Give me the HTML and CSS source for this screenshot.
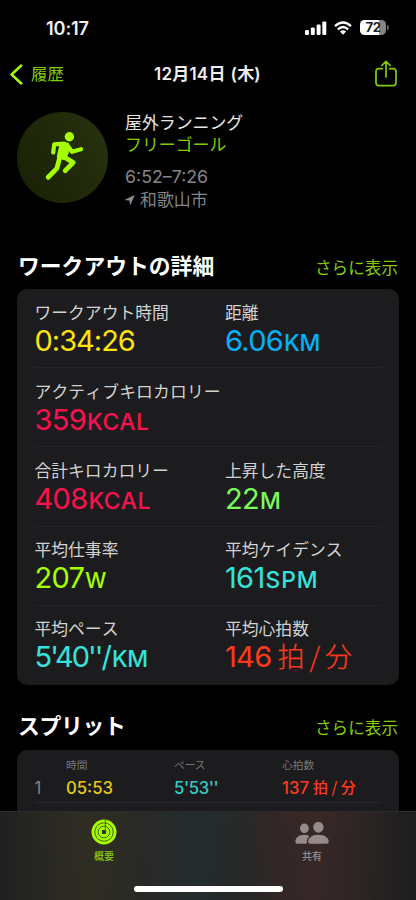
FILE: index.html
```html
<!DOCTYPE html>
<html lang="ja">
<head>
<meta charset="utf-8">
<meta name="viewport" content="width=device-width, initial-scale=1">
<title>ワークアウト</title>
<link rel="stylesheet" href="styles.css">
</head>
<body>
<div class="screen">
  <header class="status">
    <span class="clock">10:17</span>
    <div class="indicators">
      <svg class="signal" width="22" height="14" viewBox="0 0 22 14" fill="#fff"><rect x="0" y="9" width="4" height="5" rx="1.2"/><rect x="5.8" y="6.6" width="4" height="7.4" rx="1.2"/><rect x="11.6" y="3.6" width="4" height="10.4" rx="1.2"/><rect x="17.3" y="0.4" width="4" height="13.6" rx="1.2"/></svg>
      <svg class="wifi" width="18" height="14" viewBox="0 0 18 14"><g fill="none" stroke="#fff" stroke-width="2.3"><path d="M1 5.1Q9-2 17 5.1"/><path d="M3.9 8.3Q9 3.8 14.1 8.3"/></g><path d="M5.9 10.4Q9 8 12.1 10.4L9 13.7Z" fill="#fff"/></svg>
      <div class="battery"><span>72</span></div><i class="nub"></i>
    </div>
  </header>
  <nav class="navbar">
    <div class="back">
      <svg width="13" height="21" viewBox="0 0 13 21" fill="none" stroke="#a2f90a" stroke-width="2.5" stroke-linecap="round" stroke-linejoin="round"><path d="M11.2 1.5L1.6 10.5L11.2 19.5"/></svg>
      <span>履歴</span>
    </div>
    <h1><span>12月14日</span><span class="weekday">(木)</span></h1>
    <svg class="share" width="22" height="27" viewBox="0 0 22 27" fill="none" stroke="#83cb08" stroke-width="1.7" stroke-linecap="round" stroke-linejoin="round"><path d="M7.4 8.7H3.8Q1 8.7 1 11.5V22.8Q1 25.6 3.8 25.6H18.2Q21 25.6 21 22.8V11.5Q21 8.7 18.2 8.7H14.6M11 17V1.5M6.8 5.5L11 1.4L15.2 5.5"/></svg>
  </nav>
  <section class="summary">
    <div class="medal">
      <svg width="40" height="50" viewBox="0 0 40 50" fill="none" stroke="#a6ff00" stroke-linecap="round" stroke-linejoin="round"><circle cx="25.4" cy="5.8" r="4.7" fill="#a6ff00" stroke="none"/><path stroke-width="4.2" d="M20 12.6L10.2 13.4L9.2 21.4M23.5 14.5L28 20.8L37 18.2"/><path fill="#a6ff00" stroke-width="3.6" d="M17.5 12.7L23.2 13.4L23 21.6L20 27.4L14.6 25.6Z"/><path stroke-width="4.8" d="M15.6 27L12.9 37.4L4.2 46.2M19.9 25.8L29.2 31.6L21.2 39.6"/></svg>
    </div>
    <div class="info">
      <p class="kind">屋外ランニング</p>
      <p class="goal">フリーゴール</p>
      <p class="time">6:52–7:26</p>
      <p class="place"><svg width="10" height="10" viewBox="0 0 10 10" fill="#8e8e93" stroke="#8e8e93" stroke-width=".7" stroke-linejoin="round"><path d="M9.2.6L.5 4.8L4.8 5.2L5.3 9.4Z"/></svg><span>和歌山市</span></p>
    </div>
  </section>
  <section>
    <div class="heading"><h2>ワークアウトの詳細</h2><a>さらに表示</a></div>
    <div class="card metrics">
      <div class="row">
        <div class="metric yellow"><p>ワークアウト時間</p><strong class="duration">0:34:26</strong></div>
        <div class="metric blue"><p>距離</p><strong>6.06<small class="km">KM</small></strong></div>
      </div>
      <div class="row">
        <div class="metric pink"><p class="active-energy">アクティブキロカロリー</p><strong>359<small>KCAL</small></strong></div>
      </div>
      <div class="row">
        <div class="metric pink"><p>合計キロカロリー</p><strong>408<small>KCAL</small></strong></div>
        <div class="metric green"><p>上昇した高度</p><strong>22<small class="km">M</small></strong></div>
      </div>
      <div class="row">
        <div class="metric lime"><p>平均仕事率</p><strong>207<small class="watt">W</small></strong></div>
        <div class="metric cyan"><p>平均ケイデンス</p><strong>161<small class="spm">SPM</small></strong></div>
      </div>
      <div class="row">
        <div class="metric cyan"><p>平均ペース</p><strong class="pace">5'40''/<small class="km">KM</small></strong></div>
        <div class="metric red"><p>平均心拍数</p><strong>146<span class="bpm">拍<i>/</i>分</span></strong></div>
      </div>
    </div>
  </section>
  <section>
    <div class="heading splits-heading"><h2>スプリット</h2><a>さらに表示</a></div>
    <div class="card splits">
      <div class="split head"><span></span><span>時間</span><span>ペース</span><span>心拍数</span></div>
      <div class="split"><span class="index">1</span><span class="yellow">05:53</span><span class="cyan">5'53''</span><span class="red rate">137<b>拍<i>/</i>分</b></span></div>
      <div class="split"><span class="index">2</span><span class="yellow">05:41</span><span class="cyan">5'41''</span><span class="red rate">145<b>拍<i>/</i>分</b></span></div>
    </div>
  </section>
  <footer class="tabbar">
    <div class="tab active">
      <svg width="26" height="26" viewBox="0 0 26 26"><circle cx="13" cy="13" r="12.5" fill="#a6ff00"/><g fill="none" stroke="#46600e" stroke-width="1"><circle cx="13" cy="13" r="9.2"/><circle cx="13" cy="13" r="5.8"/><path d="M14.3.5V11" /></g><circle cx="13" cy="13" r="2.3" fill="#303214"/></svg>
      <span>概要</span>
    </div>
    <div class="tab">
      <svg width="34" height="26" viewBox="0 0 34 26" fill="#968b89"><ellipse cx="9.4" cy="9.3" rx="4.4" ry="4.8"/><path d="M.4 22.5C.4 18.6 4.2 15.8 9.2 15.8Q12 15.8 14.4 16.9Q11.7 19.4 11.6 24.8H2Q.4 24.8.4 22.5Z"/><ellipse cx="23.4" cy="8.2" rx="5.1" ry="5.5"/><path d="M13.2 22.5C13.2 18.6 17.4 15.7 23.5 15.7C29.5 15.7 33.7 18.6 33.7 22.5Q33.7 24.8 31.8 24.8H15.1Q13.2 24.8 13.2 22.5Z"/></svg>
      <span>共有</span>
    </div>
    <div class="home"></div>
  </footer>
</div>
</body>
</html>
```
FILE: styles.css
```css
* { box-sizing: border-box; }
html, body { margin: 0; background: #000; height: 100%; overflow: hidden; }
body { font-family: Inter, "Noto Sans CJK JP", sans-serif; color: #fff; }
p, h1, h2 { margin: 0; }
i { font-style: normal; }
svg { display: block; flex: none; }
.screen { width: 416px; height: 900px; overflow: hidden; position: relative; }

.status { height: 54px; padding: 19px 27px 0 46px; display: flex; justify-content: space-between; }
.clock { font-size: 18.2px; font-weight: 600; line-height: 18px; letter-spacing: -.15px; color: #eee; }
.indicators { display: flex; align-items: center; height: 17px; }
.wifi { margin: 0 8px 0 7px; }
.battery { width: 26px; height: 15px; border-radius: 4.5px; background: linear-gradient(90deg, #fff 72%, #858585 72%); color: #222; font-size: 13px; font-weight: 700; line-height: 15px; text-align: center; letter-spacing: -.4px; }
.nub { width: 2px; height: 5px; margin-left: 1px; border-radius: 0 2px 2px 0; background: #666; }

.navbar { height: 40px; padding: 0 19px 0 10px; display: grid; grid-template-columns: 1fr auto 1fr; align-items: center; }
.back { display: flex; align-items: center; gap: 8px; color: #83cb08; font-size: 16.4px; line-height: 24px; }
.navbar h1 { display: flex; gap: 5px; margin: 0 -4px 0 4px; font-size: 17px; line-height: 24px; font-weight: 600; letter-spacing: .2px; color: #eee; }
.share { justify-self: end; margin-bottom: 2px; }

.summary { display: flex; gap: 17px; padding: 18px 17px 0; height: 148px; }
.medal { width: 91px; height: 91px; border-radius: 50%; background: linear-gradient(60deg, #182004, #28330f); display: flex; align-items: center; justify-content: center; padding: 0 0 3px 3px; }
.info { font-size: 16.9px; line-height: 22px; color: #85858a; }
.kind { color: #e5e5e5; }
.goal { color: #83cb08; }
.time { margin-top: 10px; font-size: 17.8px; letter-spacing: 0; }
.place { display: flex; align-items: center; gap: 5px; padding-top: 1px; }

.heading { display: flex; justify-content: space-between; align-items: center; height: 47px; padding: 0 18px; }
.heading h2 { font-size: 21.8px; line-height: 30px; font-weight: 600; font-kerning: none; }
.splits-heading h2 { letter-spacing: -.3px; }
.heading a { color: #83cb08; font-size: 16.6px; line-height: 24px; padding-top: 4px; }
.card { margin: 0 17px; width: 381.5px; background: #1c1c1e; border-radius: 10px; }
.row { height: 79.2px; margin: 0 17.5px; padding-top: 12.5px; display: grid; grid-template-columns: 190.5px 1fr; border-bottom: 1px solid #252527; }
.row:last-child { border-bottom: 0; }
.metric p { font-size: 16.8px; line-height: 22px; color: #d2d2d2; white-space: nowrap; font-kerning: none; }
.metric .active-energy { letter-spacing: .15px; }
.metric strong { display: block; height: 33px; line-height: 33px; font-size: 29px; font-weight: 400; letter-spacing: -.7px; white-space: nowrap; }
.metric .duration { letter-spacing: -1px; }
.metric .pace { letter-spacing: -2px; }
.metric small { font-size: 22.8px; font-weight: 450; letter-spacing: .6px; margin-left: 1px; }
.metric .km { letter-spacing: -.2px; }
.metric .spm { letter-spacing: 1px; }
.metric .pace small { margin-left: 2px; }
.metric .watt { font-size: 21px; }
.bpm { font-family: "Noto Sans CJK JP", sans-serif; font-weight: 300; font-size: 27px; margin-left: 6px; letter-spacing: 0; line-height: 20px; -webkit-text-stroke: .25px; }
.bpm i { margin: 0 5px; }
.yellow { color: #fde20f; }
.blue { color: #00b2fa; }
.pink { color: #fa114f; }
.green { color: #7afb5b; }
.lime { color: #a6ff00; }
.cyan { color: #35e3dc; }
.red { color: #ff3a1c; }

.splits-heading { height: 65px; padding-top: 17px; }
.splits { height: 150px; padding: 8px 17.5px; }
.split { display: grid; grid-template-columns: 31.5px 108px 108px 1fr; height: 30.5px; align-items: center; border-bottom: 1px solid #29292b; font-size: 16.7px; font-weight: 500; line-height: 22px; }
.split:last-child { height: 30.5px; }
.head { height: 15px; border: 0; color: #77777b; font-size: 10.7px; font-weight: 400; line-height: 15px; }
.index { color: #818185; font-weight: 400; }
.split .yellow { color: #e4cb18; }
.split .cyan { color: #32ccc6; letter-spacing: -.4px; }
.rate { white-space: nowrap; }
.rate b { font-family: "Noto Sans CJK JP", sans-serif; font-weight: 500; font-size: 15px; margin-left: 4px; line-height: 20px; position: relative; top: -.5px; }
.rate i { margin: 0 3.5px; }

.tabbar { position: absolute; inset: 811px 0 0; display: grid; grid-template-columns: 1fr 1fr; padding-top: 7px; border-top: 1px solid #2b2b2b; background: linear-gradient(#0000, #2222), linear-gradient(90deg, #202020, #2b2a22 14%, #302e22 22%, #292a27 34%, #232d2f 48%, #262929 57%, #332726 67%, #392827 76%, #2d2524 87%, #1f1f1f 98%); }
.tab { display: flex; flex-direction: column; align-items: center; font-size: 10px; font-weight: 500; line-height: 14px; color: #91908d; gap: 4px; }
.active { color: #83cb08; }
.home { position: absolute; left: 134px; bottom: 8px; width: 149px; height: 6px; border-radius: 3px; background: #fff; }
```
